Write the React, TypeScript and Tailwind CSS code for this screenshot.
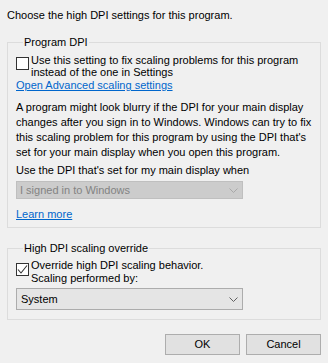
import React from "react";

const Chevron = ({ color }: { color: string }) => (
  <svg width="9" height="5" viewBox="0 0 9 5" className="block">
    <path d="M0.5 0.5 L4.5 4.5 L8.5 0.5" fill="none" stroke={color} strokeWidth="1" />
  </svg>
);

const Check = () => (
  <svg width="11" height="11" viewBox="0 0 11 11" className="block">
    <path d="M1 5.5 L4 9 L10 1.5" fill="none" stroke="#333" strokeWidth="1.1" />
  </svg>
);

export default function App() {
  return (
    <div
      className="w-[328px] h-[363px] bg-[#f0f0f0] px-[7px] text-[11px] text-black overflow-hidden whitespace-nowrap"
      style={{ fontFamily: '"Liberation Sans", Arial, sans-serif' }}
    >
      <div className="pt-[8px] leading-[15px]">Choose the high DPI settings for this program.</div>

      <fieldset className="mt-[12px] w-[314px] border border-[#dcdcdc] pl-[8px] pr-[8px] pb-[5px]">
        <legend className="ml-[7px] px-[1px] leading-[15px]">Program DPI</legend>
        <div className="flex mt-[4px]">
          <div className="mt-[3px] w-[13px] h-[13px] border border-[#333] bg-white shrink-0" />
          <div className="ml-[2px] leading-[12px]">
            Use this setting to fix scaling problems for this program
            <br />
            instead of the one in Settings
          </div>
        </div>
        <div className="leading-[15px] text-[#0066cc] underline w-fit">Open Advanced scaling settings</div>
        <div className="mt-[7px] leading-[15px]">
          A program might look blurry if the DPI for your main display
          <br />
          changes after you sign in to Windows. Windows can try to fix
          <br />
          this scaling problem for this program by using the DPI that's
          <br />
          set for your main display when you open this program.
        </div>
        <div className="mt-[3px] leading-[15px]">Use the DPI that's set for my main display when</div>
        <div className="mt-[3px] w-[227px] h-[18px] border border-[#bfbfbf] bg-[#cccccc] flex items-center justify-between pl-[3px] pr-[4px]">
          <span className="text-[#838383] leading-[15px]">I signed in to Windows</span>
          <Chevron color="#a8a8a8" />
        </div>
        <div className="mt-[8px] leading-[15px] text-[#0066cc] underline w-fit">Learn more</div>
      </fieldset>

      <fieldset className="mt-[13px] w-[314px] border border-[#dcdcdc] pl-[8px] pr-[8px] pb-[9px]">
        <legend className="ml-[7px] px-[1px] leading-[15px]">High DPI scaling override</legend>
        <div className="flex mt-[3px]">
          <div className="mt-[4px] w-[13px] h-[13px] border border-[#333] bg-white shrink-0 flex items-center justify-center">
            <Check />
          </div>
          <div className="ml-[2px] leading-[13px]">
            Override high DPI scaling behavior.
            <br />
            Scaling performed by:
          </div>
        </div>
        <div className="mt-[3px] w-[227px] h-[22px] border border-[#acacac] bg-[#e5e5e5] flex items-center justify-between pl-[4px] pr-[4px]">
          <span className="leading-[15px]">System</span>
          <Chevron color="#606060" />
        </div>
      </fieldset>

      <div className="mt-[14px] flex justify-end gap-[6px]">
        <button className="w-[75px] h-[21px] border border-[#adadad] bg-[#e1e1e1] leading-[15px]">OK</button>
        <button className="w-[75px] h-[21px] border border-[#adadad] bg-[#e1e1e1] leading-[15px]">Cancel</button>
      </div>
    </div>
  );
}
